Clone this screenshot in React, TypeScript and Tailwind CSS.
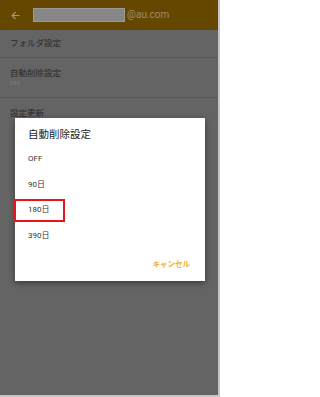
import React from "react";

const font = { fontFamily: '"Roboto", "Noto Sans CJK JP", sans-serif' };

export default function App() {
  return (
    <div
      className="relative w-[220px] h-[397px] overflow-hidden bg-[#646464] border-r-2 border-b-2 border-[#c6c6c6]"
      style={font}
    >
      {/* header */}
      <div className="h-[30px] bg-[#664700] flex items-center">
        <svg width="9" height="9" viewBox="0 0 24 24" className="ml-[11px]" fill="none" stroke="#a8987a" strokeWidth="3.2" strokeLinecap="square">
          <path d="M21 12H4M11 4l-8 8 8 8" />
        </svg>
        <div className="ml-[13px] w-[92px] h-[14px] bg-[#878787] border border-[#9a9a9a]" />
        <span className="ml-[2px] text-[10px] leading-none text-[#9f8e6c]">@au.com</span>
      </div>

      {/* list */}
      <div className="flex flex-col">
        <div className="h-[28px] flex items-center pl-[10px] text-[8.5px] text-[#2a2a2a] border-b border-[#595959]">
          フォルダ設定
        </div>
        <div className="h-[40px] flex flex-col justify-center pl-[10px] border-b border-[#595959]">
          <span className="text-[8.5px] leading-[11px] text-[#2a2a2a]">自動削除設定</span>
          <span className="text-[6px] leading-[8px] text-[#7e7e7e]">OFF</span>
        </div>
        <div className="h-[30px] flex items-center pl-[10px] text-[8.5px] text-[#2a2a2a]">
          設定更新
        </div>
      </div>

      {/* dialog */}
      <div className="absolute left-[15px] top-[118px] w-[190px] h-[163px] bg-white shadow-[0_2px_6px_rgba(0,0,0,0.45)] flex flex-col">
        <div className="h-[28px] pt-[6px] flex items-center pl-[13px] text-[10.5px] text-[#222]">
          自動削除設定
        </div>
        <div className="flex flex-col pl-[13px] text-[8px] text-[#333]">
          <div className="h-[26px] flex items-center">OFF</div>
          <div className="h-[25px] flex items-center">90日</div>
          <div className="h-[26px] flex items-center">180日</div>
          <div className="h-[26px] flex items-center">390日</div>
        </div>
        <div className="flex-1 flex items-center justify-end pr-[15px] text-[7.5px] font-bold text-[#f5b02e]">
          キャンセル
        </div>
      </div>

      {/* red highlight */}
      <div className="absolute left-[14px] top-[199px] w-[51px] h-[23px] border-2 border-[#e8141b]" />
    </div>
  );
}
